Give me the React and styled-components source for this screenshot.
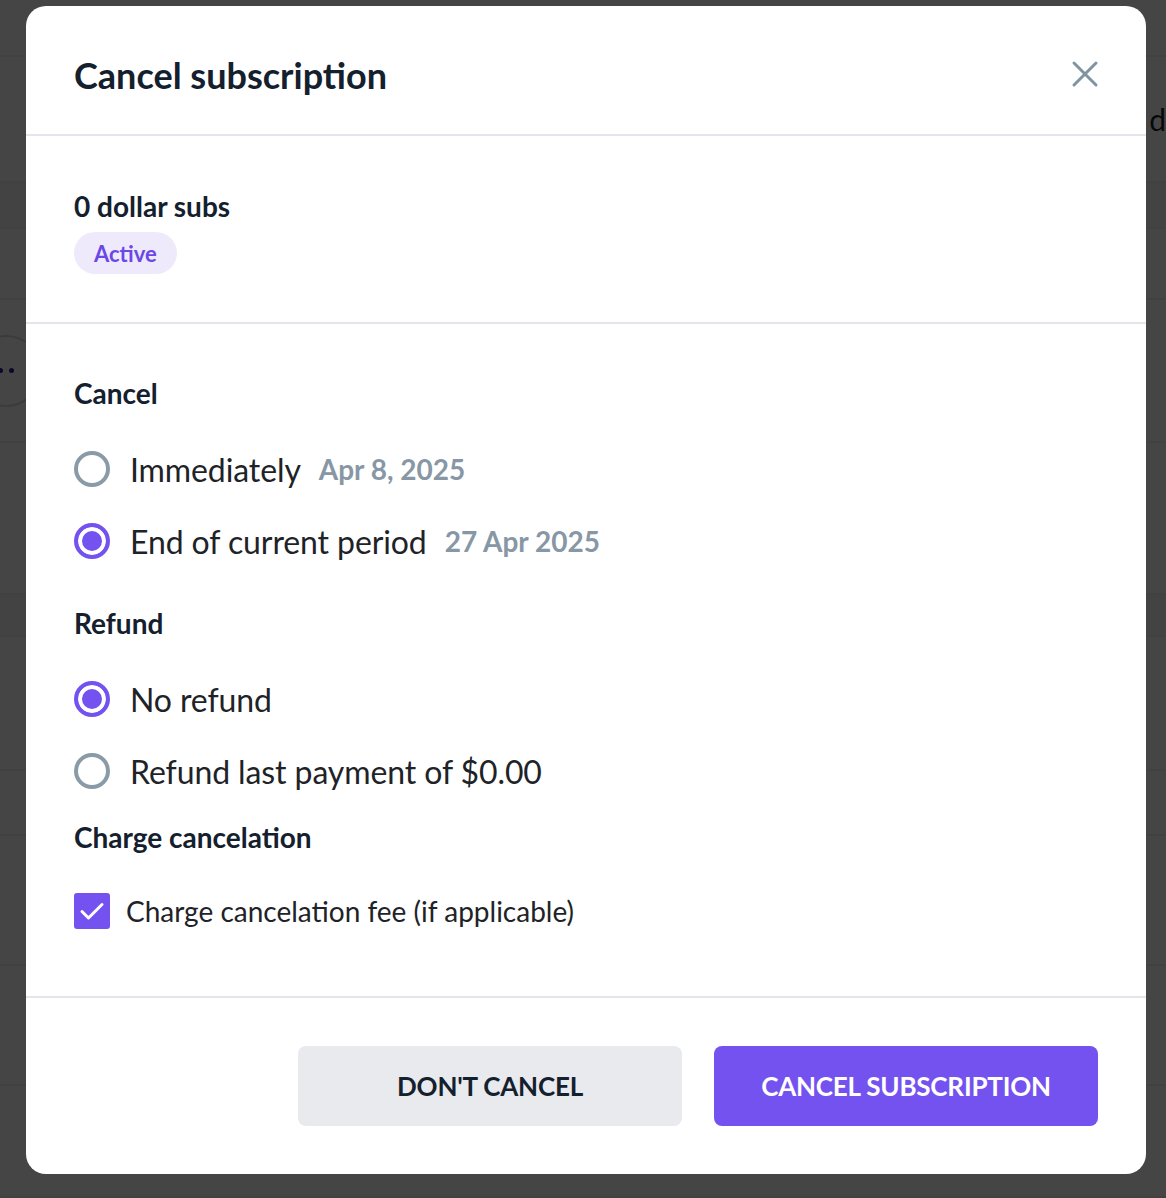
import React from 'react';
import styled, { createGlobalStyle } from 'styled-components';

const GlobalStyle = createGlobalStyle`
  html, body {
    margin: 0;
    padding: 0;
    background: #ffffff;
    font-family: Lato, "Open Sans", Arial, sans-serif;
  }
  * { box-sizing: border-box; }
`;

const Page = styled.div`
  position: relative;
  width: 1166px;
  height: 1198px;
  overflow: hidden;
  background: #ffffff;
`;

const BgList = styled.div`
  display: flex;
  flex-direction: column;
`;

const BgRow = styled.div`
  height: ${(p) => p.h}px;
  flex: none;
  border-bottom: 2px solid #eef0f2;
  background: ${(p) => (p.shade ? '#f7f8fa' : '#ffffff')};
  display: flex;
  align-items: center;
  justify-content: space-between;
  font-size: 30px;
  color: #1e2328;
`;

const BgMore = styled.div`
  width: 72px;
  height: 72px;
  margin-left: -30px;
  border-radius: 50%;
  border: 2px solid #d6d9de;
  display: flex;
  align-items: center;
  justify-content: center;
  gap: 6px;
  & span {
    width: 5px;
    height: 5px;
    border-radius: 50%;
    background: #2c1f8f;
  }
`;

const Overlay = styled.div`
  position: absolute;
  inset: 0;
  background: rgba(0, 0, 0, 0.73);
  padding: 6px 20px 24px 26px;
`;

const Modal = styled.div`
  width: 1120px;
  background: #ffffff;
  border-radius: 20px;
  overflow: hidden;
  color: #14202e;
`;

const Header = styled.div`
  height: 130px;
  display: flex;
  align-items: center;
  justify-content: space-between;
  padding: 10px 46px 0 48px;
  border-bottom: 2px solid #e3e6ea;
`;

const Title = styled.h2`
  margin: 0;
  font-size: 36px;
  font-weight: 700;
  color: #14202e;
`;

const CloseButton = styled.button`
  border: 0;
  background: none;
  padding: 0;
  width: 30px;
  height: 30px;
  margin-top: -3px;
  display: flex;
  align-items: center;
  justify-content: center;
  cursor: pointer;
`;

const Section = styled.div`
  padding: ${(p) => p.pad};
  border-bottom: ${(p) => (p.divider ? '2px solid #e3e6ea' : 'none')};
`;

const PlanName = styled.div`
  font-size: 28px;
  line-height: 32px;
  font-weight: 700;
  color: #14202e;
`;

const Badge = styled.span`
  display: inline-flex;
  align-items: center;
  height: 42px;
  margin-top: 10px;
  padding: 0 20px;
  border-radius: 21px;
  background: #eeeafc;
  color: #6b47e6;
  font-size: 22px;
  font-weight: 700;
`;

const GroupTitle = styled.div`
  font-size: 28px;
  line-height: 32px;
  font-weight: 700;
  color: #14202e;
  margin-top: ${(p) => p.top || 0}px;
  margin-bottom: ${(p) => p.bottom}px;
`;

const Options = styled.div`
  display: flex;
  flex-direction: column;
  gap: 16px;
`;

const OptionRow = styled.label`
  display: flex;
  align-items: center;
  height: 56px;
  cursor: pointer;
`;

const Radio = styled.span`
  width: 36px;
  height: 36px;
  flex: none;
  border-radius: 50%;
  border: 4px solid ${(p) => (p.checked ? '#7452f0' : '#8a9ba8')};
  background: ${(p) => (p.checked ? '#7452f0' : '#ffffff')};
  box-shadow: ${(p) => (p.checked ? 'inset 0 0 0 4px #ffffff' : 'none')};
`;

const OptionText = styled.span`
  margin-left: 20px;
  font-size: 32px;
  letter-spacing: -0.1px;
  color: #1e2328;
`;

const OptionDate = styled.span`
  margin-left: 18px;
  font-size: 28px;
  font-weight: 700;
  color: #8797a5;
`;

const CheckRow = styled.label`
  display: flex;
  align-items: center;
  height: 56px;
  cursor: pointer;
`;

const CheckBox = styled.span`
  width: 36px;
  height: 36px;
  flex: none;
  border-radius: 3px;
  background: #7452f0;
  display: flex;
  align-items: center;
  justify-content: center;
`;

const CheckText = styled.span`
  margin-left: 16px;
  font-size: 28px;
  color: #1e2328;
`;

const Footer = styled.div`
  display: flex;
  justify-content: flex-end;
  gap: 32px;
  padding: 48px;
`;

const Button = styled.button`
  width: 384px;
  height: 80px;
  border: 0;
  border-radius: 8px;
  font-family: inherit;
  font-size: 26px;
  font-weight: 700;
  text-transform: uppercase;
  letter-spacing: -0.2px;
  cursor: pointer;
  background: ${(p) => (p.primary ? '#7452f0' : '#e9eaee')};
  color: ${(p) => (p.primary ? '#ffffff' : '#14202e')};
`;

const CloseIcon = () => (
  <svg width="28" height="28" viewBox="0 0 28 28" fill="none">
    <path d="M3 3L25 25M25 3L3 25" stroke="#7f93a1" strokeWidth="3" strokeLinecap="round" />
  </svg>
);

const CheckIcon = () => (
  <svg width="26" height="26" viewBox="0 0 26 26" fill="none">
    <path d="M3 13.5L9.5 20L23 6.5" stroke="#ffffff" strokeWidth="3" strokeLinecap="round" strokeLinejoin="round" />
  </svg>
);

const bgRows = [
  { h: 57 }, { h: 126, label: 'd' }, { h: 46, shade: true }, { h: 71 }, { h: 143, more: true },
  { h: 152 }, { h: 42, shade: true }, { h: 134 }, { h: 65 }, { h: 130 }, { h: 120 },
  { h: 112 },
];

export default function App() {
  return (
    <>
      <GlobalStyle />
      <Page>
        <BgList>
          {bgRows.map((r, i) => (
            <BgRow key={i} h={r.h} shade={r.shade}>
              {r.more ? (
                <BgMore>
                  <span />
                  <span />
                </BgMore>
              ) : (
                <span />
              )}
              <span>{r.label || ''}</span>
            </BgRow>
          ))}
        </BgList>

        <Overlay>
          <Modal role="dialog" aria-label="Cancel subscription">
            <Header>
              <Title>Cancel subscription</Title>
              <CloseButton aria-label="Close">
                <CloseIcon />
              </CloseButton>
            </Header>

            <Section divider pad="54px 48px 48px">
              <PlanName>0 dollar subs</PlanName>
              <Badge>Active</Badge>
            </Section>

            <Section divider pad="53px 48px 57px">
              <GroupTitle bottom={32}>Cancel</GroupTitle>
              <Options>
                <OptionRow>
                  <Radio />
                  <OptionText>Immediately</OptionText>
                  <OptionDate>Apr 8, 2025</OptionDate>
                </OptionRow>
                <OptionRow>
                  <Radio checked />
                  <OptionText>End of current period</OptionText>
                  <OptionDate>27 Apr 2025</OptionDate>
                </OptionRow>
              </Options>

              <GroupTitle top={38} bottom={32}>Refund</GroupTitle>
              <Options>
                <OptionRow>
                  <Radio checked />
                  <OptionText>No refund</OptionText>
                </OptionRow>
                <OptionRow>
                  <Radio />
                  <OptionText>Refund last payment of $0.00</OptionText>
                </OptionRow>
              </Options>

              <GroupTitle top={22} bottom={30}>Charge cancelation</GroupTitle>
              <CheckRow>
                <CheckBox>
                  <CheckIcon />
                </CheckBox>
                <CheckText>Charge cancelation fee (if applicable)</CheckText>
              </CheckRow>
            </Section>

            <Footer>
              <Button>Don't cancel</Button>
              <Button primary>Cancel subscription</Button>
            </Footer>
          </Modal>
        </Overlay>
      </Page>
    </>
  );
}
